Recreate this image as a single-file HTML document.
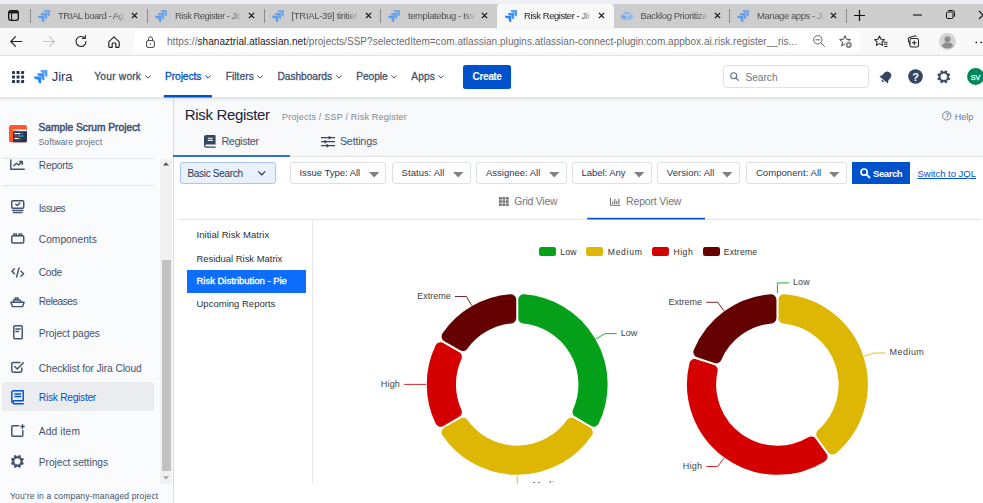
<!DOCTYPE html>
<html lang="en">
<head>
<meta charset="utf-8">
<title>Risk Register - Jira</title>
<style>
*{box-sizing:border-box;margin:0;padding:0}
html,body{width:983px;height:503px;overflow:hidden;background:#fff}
body{font-family:"Liberation Sans",Arial,sans-serif;color:#172b4d;position:relative;font-size:10px}
.a{position:absolute}
.t{position:absolute;white-space:nowrap;line-height:1}
svg{position:absolute;overflow:visible}
.sep{position:absolute;top:9px;width:1px;height:14px;background:#8a8a8a}
.fb{position:absolute;top:162px;height:22px;background:#fff;border:1px solid #dcdfe4;border-radius:3px}
</style>
</head>
<body>
<!-- ===== BROWSER CHROME ===== -->
<div class="a" style="left:0;top:0;width:983px;height:4px;background:#eff0f6"></div>
<div class="a" style="left:0;top:4px;width:983px;height:24px;background:#cdcdcd"></div>
<div class="a" style="left:497px;top:4px;width:117px;height:24px;background:#f8f8f9;border-radius:3.500px 3.500px 0 0"></div>
<div class="a" style="left:0;top:28px;width:983px;height:28px;background:#f8f8f9;border-bottom:1px solid #e1e1e1"></div>
<div class="a" style="left:134px;top:31px;width:726px;height:21px;background:#fff;border-radius:4px"></div>
<svg width="0" height="0"><defs>
<symbol id="jira" viewBox="0 0 24 24"><path d="M11.571 11.513H0a5.218 5.218 0 0 0 5.232 5.215h2.13v2.057A5.215 5.215 0 0 0 12.575 24V12.518a1.005 1.005 0 0 0-1.005-1.005z"/><path d="M17.294 5.757H5.736a5.215 5.215 0 0 0 5.215 5.214h2.129v2.058a5.218 5.218 0 0 0 5.215 5.214V6.758a1.001 1.001 0 0 0-1.001-1.001z" opacity=".9"/><path d="M23.013 0H11.455a5.215 5.215 0 0 0 5.215 5.215h2.129v2.057A5.215 5.215 0 0 0 24 12.483V1.005A1.001 1.001 0 0 0 23.013 0Z" opacity=".78"/></symbol>
<symbol id="xx" viewBox="0 0 8 8"><path d="M1 1L7 7M7 1L1 7" stroke="#111" stroke-width="1.400" fill="none"/></symbol>
</defs></svg>
<svg style="left:8px;top:10px" width="11" height="11" viewBox="0 0 11 11"><rect x=".7" y=".7" width="9.600" height="9.600" rx="2" fill="none" stroke="#111" stroke-width="1.300"/><path d="M1 2.300h9" stroke="#111" stroke-width="2.200"/><path d="M3.600 3v7" stroke="#111" stroke-width="1"/></svg>
<div class="sep" style="left:30px"></div>
<svg style="left:38px;top:10px" width="12" height="12"><use href="#jira" fill="#5c9df0"/></svg>
<div class="t" style="left:58.00px;top:11.00px;font-size:9.5px;color:#4f4f4f;letter-spacing:-0.472px;-webkit-mask-image:linear-gradient(90deg,#000 86%,rgba(0,0,0,.2) 100%);mask-image:linear-gradient(90deg,#000 86%,rgba(0,0,0,.2) 100%);padding-bottom:3px;">TRIAL board - Ag</div>
<svg style="left:131px;top:12.200px" width="7" height="7"><use href="#xx"/></svg>
<div class="sep" style="left:147px"></div>
<svg style="left:155px;top:10px" width="12" height="12"><use href="#jira" fill="#5c9df0"/></svg>
<div class="t" style="left:175.00px;top:11.00px;font-size:9.5px;color:#4f4f4f;letter-spacing:-0.524px;-webkit-mask-image:linear-gradient(90deg,#000 86%,rgba(0,0,0,.2) 100%);mask-image:linear-gradient(90deg,#000 86%,rgba(0,0,0,.2) 100%);padding-bottom:3px;">Risk Register - Jir</div>
<svg style="left:248px;top:12.200px" width="7" height="7"><use href="#xx"/></svg>
<div class="sep" style="left:264px"></div>
<svg style="left:272px;top:10px" width="12" height="12"><use href="#jira" fill="#5c9df0"/></svg>
<div class="t" style="left:291.50px;top:11.00px;font-size:9.5px;color:#4f4f4f;letter-spacing:-0.304px;-webkit-mask-image:linear-gradient(90deg,#000 86%,rgba(0,0,0,.2) 100%);mask-image:linear-gradient(90deg,#000 86%,rgba(0,0,0,.2) 100%);padding-bottom:3px;">[TRIAL-39] tiritiet</div>
<svg style="left:365px;top:12.200px" width="7" height="7"><use href="#xx"/></svg>
<div class="sep" style="left:380px"></div>
<svg style="left:388px;top:10px" width="12" height="12"><use href="#jira" fill="#5c9df0"/></svg>
<div class="t" style="left:408.00px;top:11.00px;font-size:9.5px;color:#4f4f4f;letter-spacing:-0.404px;-webkit-mask-image:linear-gradient(90deg,#000 86%,rgba(0,0,0,.2) 100%);mask-image:linear-gradient(90deg,#000 86%,rgba(0,0,0,.2) 100%);padding-bottom:3px;">templatebug - Iss</div>
<svg style="left:481px;top:12.200px" width="7" height="7"><use href="#xx"/></svg>
<svg style="left:505px;top:10px" width="12" height="12"><use href="#jira" fill="#2684ff"/></svg>
<div class="t" style="left:524.00px;top:11.00px;font-size:9.5px;color:#1b1b1b;letter-spacing:-0.471px;-webkit-mask-image:linear-gradient(90deg,#000 86%,rgba(0,0,0,.2) 100%);mask-image:linear-gradient(90deg,#000 86%,rgba(0,0,0,.2) 100%);padding-bottom:3px;">Risk Register - Jir</div>
<svg style="left:598px;top:12.200px" width="7" height="7"><use href="#xx"/></svg>
<svg style="left:621px;top:11px" width="12" height="10" viewBox="0 0 12 10"><path d="M6 0L12 2 6 4 0 2z" fill="#a4c5f6"/><path d="M3 1.600L6 2.600 9 1.600" fill="none" stroke="#6fa3ec" stroke-width=".7"/><path d="M.3 3.300l5.200 1.800v4.200l-5.200-1.800z" fill="#78aaf0"/><path d="M11.700 3.300l-5.200 1.800v4.200l5.200-1.800z" fill="#8cb7f3"/></svg>
<div class="t" style="left:640.50px;top:11.00px;font-size:9.5px;color:#4f4f4f;letter-spacing:-0.383px;-webkit-mask-image:linear-gradient(90deg,#000 86%,rgba(0,0,0,.2) 100%);mask-image:linear-gradient(90deg,#000 86%,rgba(0,0,0,.2) 100%);padding-bottom:3px;">Backlog Prioritiza</div>
<svg style="left:714px;top:12.200px" width="7" height="7"><use href="#xx"/></svg>
<div class="sep" style="left:729px"></div>
<svg style="left:737px;top:10px" width="12" height="12"><use href="#jira" fill="#5c9df0"/></svg>
<div class="t" style="left:757.00px;top:11.00px;font-size:9.5px;color:#4f4f4f;letter-spacing:-0.430px;-webkit-mask-image:linear-gradient(90deg,#000 86%,rgba(0,0,0,.2) 100%);mask-image:linear-gradient(90deg,#000 86%,rgba(0,0,0,.2) 100%);padding-bottom:3px;">Manage apps - Ji</div>
<svg style="left:830px;top:12.200px" width="7" height="7"><use href="#xx"/></svg>
<div class="sep" style="left:846px"></div>
<svg style="left:854px;top:10px" width="11" height="11" viewBox="0 0 11 11"><path d="M5.500 0v11M0 5.500h11" stroke="#111" stroke-width="1.200"/></svg>
<svg style="left:913px;top:14px" width="9" height="2" viewBox="0 0 9 2"><path d="M0 1h9" stroke="#111" stroke-width="1.100"/></svg>
<svg style="left:946px;top:10px" width="9" height="9" viewBox="0 0 9 9"><rect x=".5" y="2" width="6.500" height="6.500" rx="1.300" fill="none" stroke="#111"/><path d="M2.300 .5h4.200a2 2 0 0 1 2 2v4.200" fill="none" stroke="#111"/></svg>
<svg style="left:979px;top:11px" width="8" height="8" viewBox="0 0 8 8"><path d="M0 0l8 8M8 0l-8 8" stroke="#111" stroke-width="1.100"/></svg>
<svg style="left:10px;top:36px" width="12" height="11" viewBox="0 0 12 11"><path d="M11.700 5.500H1M5.500 .7L.8 5.500l4.700 4.800" fill="none" stroke="#222" stroke-width="1.150" stroke-linecap="round" stroke-linejoin="round"/></svg>
<svg style="left:42.500px;top:36px" width="12" height="11" viewBox="0 0 12 11"><path d="M.3 5.500H11M6.500 .7l4.700 4.800-4.700 4.800" fill="none" stroke="#c6c6c6" stroke-width="1.150" stroke-linecap="round" stroke-linejoin="round"/></svg>
<svg style="left:75px;top:35px" width="12" height="13" viewBox="0 0 12 13"><path d="M11 6.500a5 5 0 1 1-1.600-3.700" fill="none" stroke="#222" stroke-width="1.150" stroke-linecap="round"/><path d="M10.300 .5v3h-3" fill="none" stroke="#222" stroke-width="1.150" stroke-linecap="round" stroke-linejoin="round"/></svg>
<svg style="left:107.500px;top:35.500px" width="12" height="12" viewBox="0 0 12 12"><path d="M.8 5.800L6 .9l5.200 4.900V10.500a.8.800 0 0 1-.8.800H7.800V7.600a.6.600 0 0 0-.6-.6H4.800a.6.600 0 0 0-.6.600v3.700H1.600a.8.800 0 0 1-.8-.8z" fill="none" stroke="#222" stroke-width="1.150" stroke-linejoin="round"/></svg>
<svg style="left:146px;top:35.500px" width="9" height="12" viewBox="0 0 9 12"><rect x=".6" y="4.600" width="7.800" height="6.800" rx="1.300" fill="none" stroke="#444" stroke-width="1"/><path d="M2.500 4.600V2.800a2 2 0 0 1 4 0v1.800" fill="none" stroke="#444" stroke-width="1"/><circle cx="4.500" cy="8" r=".8" fill="#444"/></svg>
<div class="t" style="left:167.00px;top:37.00px;font-size:10px;color:#6b6b6b;letter-spacing:0.061px;">https://</div>
<div class="t" style="left:197.50px;top:37.00px;font-size:10px;color:#1a1a1a;letter-spacing:0.048px;">shanaztrial.atlassian.net</div>
<div class="t" style="left:306.00px;top:37.00px;font-size:10px;color:#6b6b6b;letter-spacing:0.035px;">/projects/SSP?selectedItem=com.atlassian.plugins.atlassian-connect-plugin:com.appbox.ai.risk.register__ris...</div>
<svg style="left:813px;top:35px" width="12" height="12" viewBox="0 0 12 12"><circle cx="4.800" cy="4.800" r="4.200" fill="none" stroke="#666" stroke-width="1"/><path d="M7.900 7.900l3.600 3.600M2.800 4.800h4" stroke="#666" stroke-width="1" stroke-linecap="round"/></svg>
<svg style="left:839px;top:34.500px" width="13" height="13" viewBox="0 0 13 13"><path d="M6.00 0.70L7.53 4.20L11.33 4.57L8.47 7.10L9.29 10.83L6.00 8.90L2.71 10.83L3.53 7.10L0.67 4.57L4.47 4.20z" fill="none" stroke="#444" stroke-width="1" stroke-linejoin="round"/><circle cx="9.800" cy="10" r="3.700" fill="#fff"/><circle cx="9.800" cy="10" r="2.900" fill="#777"/><path d="M9.800 8.400v3.200M8.200 10h3.200" stroke="#fff" stroke-width=".9"/></svg>
<svg style="left:874px;top:34.500px" width="14" height="13" viewBox="0 0 14 13"><path d="M5.500 1l1.500 3.200 3.400.4-2.500 2.300.7 3.500-3.100-1.800-3.100 1.800.7-3.500L.6 4.600 4 4.200z" fill="none" stroke="#222" stroke-width="1.050" stroke-linejoin="round"/><path d="M9.500 7.200h4M10 9.300h3.500M10.300 11.400h3.200" stroke="#222" stroke-width="1.050"/></svg>
<svg style="left:906px;top:34.500px" width="14" height="13" viewBox="0 0 14 13"><rect x="4" y="3.500" width="8.500" height="8.500" rx="1.800" fill="none" stroke="#222" stroke-width="1.050"/><path d="M3.800 9.700l-1.600-5a1.800 1.800 0 0 1 1.100-2.200l5-1.600a1.800 1.800 0 0 1 2 .8" fill="none" stroke="#222" stroke-width="1.050"/><path d="M8.250 5.500v4.500M6 7.750h4.500" stroke="#222" stroke-width="1.050"/></svg>
<svg style="left:938.500px;top:33px" width="17" height="17" viewBox="0 0 17 17"><circle cx="8.500" cy="8.500" r="8.500" fill="#d4d4d4"/><circle cx="8.500" cy="6.200" r="3" fill="#8e8e8e"/><path d="M3 13.200c.6-3 2.600-3.600 5.500-3.600s4.900.6 5.500 3.600a8 8 0 0 1-11 0z" fill="#8e8e8e"/></svg>
<svg style="left:975px;top:41px" width="12" height="3" viewBox="0 0 12 3"><circle cx="1.300" cy="1.300" r=".9" fill="#222"/><circle cx="6.100" cy="1.300" r=".9" fill="#222"/><circle cx="10.900" cy="1.300" r=".9" fill="#222"/></svg>
<!-- ===== JIRA TOP NAV ===== -->
<div class="a" style="left:0;top:56px;width:983px;height:41.300px;background:#fff"></div>
<svg style="left:12px;top:71px" width="12.100" height="12.100" viewBox="0 0 12.100 12.100" fill="#253858"><rect x="0.00" y="0.00" width="3" height="3" rx=".5"/><rect x="4.55" y="0.00" width="3" height="3" rx=".5"/><rect x="9.10" y="0.00" width="3" height="3" rx=".5"/><rect x="0.00" y="4.55" width="3" height="3" rx=".5"/><rect x="4.55" y="4.55" width="3" height="3" rx=".5"/><rect x="9.10" y="4.55" width="3" height="3" rx=".5"/><rect x="0.00" y="9.10" width="3" height="3" rx=".5"/><rect x="4.55" y="9.10" width="3" height="3" rx=".5"/><rect x="9.10" y="9.10" width="3" height="3" rx=".5"/></svg>
<svg style="left:34px;top:69.800px" width="13.600" height="13.600"><use href="#jira" fill="#2684ff"/></svg>
<div class="t" style="left:51.80px;top:70.00px;font-size:13px;color:#253858;letter-spacing:-0.063px;">Jira</div>
<div class="t" style="left:94.30px;top:72.00px;font-size:10.2px;color:#42526e;letter-spacing:0.218px;-webkit-text-stroke:.3px #42526e;">Your work</div>
<svg style="left:144.7px;top:74.8px" width="6" height="4" viewBox="0 0 6 4"><path d="M.6 .7L3 3.100 5.400 .7" fill="none" stroke="#42526e" stroke-width="1" stroke-linecap="round" stroke-linejoin="round"/></svg>
<div class="t" style="left:165.00px;top:72.00px;font-size:10.2px;color:#0052cc;letter-spacing:-0.064px;-webkit-text-stroke:.3px #0052cc;">Projects</div>
<svg style="left:205px;top:74.8px" width="6" height="4" viewBox="0 0 6 4"><path d="M.6 .7L3 3.100 5.400 .7" fill="none" stroke="#0052cc" stroke-width="1" stroke-linecap="round" stroke-linejoin="round"/></svg>
<div class="t" style="left:225.70px;top:72.00px;font-size:10.2px;color:#42526e;letter-spacing:0.052px;-webkit-text-stroke:.3px #42526e;">Filters</div>
<svg style="left:257px;top:74.8px" width="6" height="4" viewBox="0 0 6 4"><path d="M.6 .7L3 3.100 5.400 .7" fill="none" stroke="#42526e" stroke-width="1" stroke-linecap="round" stroke-linejoin="round"/></svg>
<div class="t" style="left:277.50px;top:72.00px;font-size:10.2px;color:#42526e;letter-spacing:-0.044px;-webkit-text-stroke:.3px #42526e;">Dashboards</div>
<svg style="left:335.5px;top:74.8px" width="6" height="4" viewBox="0 0 6 4"><path d="M.6 .7L3 3.100 5.400 .7" fill="none" stroke="#42526e" stroke-width="1" stroke-linecap="round" stroke-linejoin="round"/></svg>
<div class="t" style="left:356.30px;top:72.00px;font-size:10.2px;color:#42526e;letter-spacing:-0.089px;-webkit-text-stroke:.3px #42526e;">People</div>
<svg style="left:390.7px;top:74.8px" width="6" height="4" viewBox="0 0 6 4"><path d="M.6 .7L3 3.100 5.400 .7" fill="none" stroke="#42526e" stroke-width="1" stroke-linecap="round" stroke-linejoin="round"/></svg>
<div class="t" style="left:411.30px;top:72.00px;font-size:10.2px;color:#42526e;letter-spacing:0.116px;-webkit-text-stroke:.3px #42526e;">Apps</div>
<svg style="left:438.2px;top:74.8px" width="6" height="4" viewBox="0 0 6 4"><path d="M.6 .7L3 3.100 5.400 .7" fill="none" stroke="#42526e" stroke-width="1" stroke-linecap="round" stroke-linejoin="round"/></svg>
<svg style="left:163px;top:94px" width="50" height="4" viewBox="0 0 50 4"><path d="M.7 3.500V1.700a.8.800 0 0 1 .8-.8H48.200a.8.800 0 0 1 .8.800V3.500z" fill="#0052cc"/></svg>
<div class="a" style="left:463px;top:65px;width:48px;height:23.500px;background:#0052cc;border-radius:2.500px"></div>
<div class="t" style="left:472.50px;top:72.00px;font-size:10.2px;color:#fff;font-weight:700;letter-spacing:-0.453px;">Create</div>
<div class="a" style="left:722.500px;top:65.300px;width:146px;height:22.400px;background:#fff;border:1.500px solid #dfe1e6;border-radius:4px"></div>
<svg style="left:730px;top:72px" width="9" height="9" viewBox="0 0 9 9"><circle cx="3.700" cy="3.700" r="3" fill="none" stroke="#5e6c84" stroke-width="1.100"/><path d="M6 6l2.400 2.400" stroke="#5e6c84" stroke-width="1.100" stroke-linecap="round"/></svg>
<div class="t" style="left:745.50px;top:73.00px;font-size:10.2px;color:#6b778c;letter-spacing:-0.047px;">Search</div>
<svg style="left:879px;top:70px" width="14" height="14" viewBox="0 0 14 14"><g transform="rotate(40 7 7)" fill="#344563"><path d="M7 1.200a4 4 0 0 1 4 4v2.900l1.300 1.900a.5.500 0 0 1-.4.800H2.100a.5.500 0 0 1-.4-.8L3 8.100V5.200a4 4 0 0 1 4-4z"/><path d="M5.500 11.600h3a1.500 1.500 0 0 1-3 0z"/></g></svg>
<svg style="left:907.500px;top:69px" width="15" height="15" viewBox="0 0 15 15"><circle cx="7.500" cy="7.500" r="7.300" fill="#344563"/></svg>
<div class="t" style="left:912.20px;top:72.00px;font-size:11px;color:#fff;font-weight:700;">?</div>
<svg style="left:937.300px;top:69.700px" width="13.600" height="13.600" viewBox="0 0 15 15"><path fill="#344563" fill-rule="evenodd" stroke="#344563" stroke-width=".5" stroke-linejoin="round" d="M12.95 8.23L14.33 9.43L13.69 10.97L11.87 10.84L10.84 11.87L10.97 13.69L9.43 14.33L8.23 12.95L6.77 12.95L5.57 14.33L4.03 13.69L4.16 11.87L3.13 10.84L1.31 10.97L0.67 9.43L2.05 8.23L2.05 6.77L0.67 5.57L1.31 4.03L3.13 4.16L4.16 3.13L4.03 1.31L5.57 0.67L6.77 2.05L8.23 2.05L9.43 0.67L10.97 1.31L10.84 3.13L11.87 4.16L13.69 4.03L14.33 5.57L12.95 6.77zM11.40 7.50A3.9 3.9 0 1 0 3.60 7.50A3.9 3.9 0 1 0 11.40 7.50z"/></svg>
<svg style="left:966.500px;top:68px" width="17" height="17" viewBox="0 0 17 17"><circle cx="8.600" cy="8.600" r="8.500" fill="#00875a"/></svg>
<div class="t" style="left:970.80px;top:74.00px;font-size:7.2px;color:#fff;letter-spacing:-0.097px;-webkit-text-stroke:.25px #fff;">SV</div>
<!-- ===== SIDEBAR ===== -->
<div class="a" style="left:0;top:98px;width:173.500px;height:405px;background:#fafbfc;border-right:1px solid #d8dbe0"></div>
<svg style="left:9.200px;top:124.500px" width="18" height="17.600" viewBox="0 0 18 17.600"><defs><clipPath id="pav"><rect width="18" height="17.600" rx="2.200"/></clipPath></defs><g clip-path="url(#pav)"><rect width="18" height="17.600" fill="#ff5630"/><rect x="4" y="4.300" width="14" height="13.300" fill="#253858"/><rect x="4" y="4.300" width="14" height="1.900" fill="#ebecf0"/><rect x="5" y="4.800" width="1" height=".9" fill="#ffab00"/><rect x="6.300" y="4.800" width="1" height=".9" fill="#36b37e"/><rect x="7.600" y="4.800" width="1" height=".9" fill="#4c9aff"/><rect x="5.400" y="8" width="5.800" height="1.200" fill="#f4f5f7"/><rect x="11.600" y="8" width="2" height="1.200" fill="#2684ff"/><rect x="5.400" y="10.200" width="2.600" height="1.600" fill="#de350b"/><rect x="8.800" y="10.200" width="5.800" height="1.600" fill="#00a3bf"/><rect x="5.400" y="12.900" width="4.400" height="1.200" fill="#f4f5f7"/><rect x="10.500" y="12.700" width="1.500" height="1.500" rx=".75" fill="#ff5630"/></g></svg>
<div class="t" style="left:38.50px;top:123.00px;font-size:10.2px;color:#42526e;letter-spacing:0.013px;-webkit-text-stroke:.5px #42526e;">Sample Scrum Project</div>
<div class="t" style="left:38.50px;top:138.00px;font-size:8.6px;color:#5e6c84;letter-spacing:0.099px;">Software project</div>
<div class="a" style="left:2px;top:158px;width:152px;height:1px;background:#e4e6ea"></div>
<div class="a" style="left:2px;top:185px;width:152px;height:1px;background:#e4e6ea"></div>
<div class="a" style="left:160.300px;top:158.500px;width:12px;height:325px;background:#f1f1f1"></div>
<div class="a" style="left:161.500px;top:260px;width:9.500px;height:211px;background:#c1c1c1"></div>
<svg style="left:163.400px;top:162.200px" width="6" height="4" viewBox="0 0 6 4"><path d="M0 3.500L3 .3 6 3.500z" fill="#505050"/></svg>
<svg style="left:163.400px;top:475.500px" width="6" height="4" viewBox="0 0 6 4"><path d="M0 .3L3 3.500 6 .3z" fill="#a3a3a3"/></svg>
<div class="a" style="left:2px;top:382.200px;width:151.500px;height:29px;background:#ebecf0;border-radius:2px"></div>
<div class="t" style="left:38.80px;top:161.00px;font-size:10.2px;color:#42526e;letter-spacing:-0.210px;">Reports</div>
<div class="t" style="left:38.80px;top:204.00px;font-size:10.2px;color:#42526e;letter-spacing:-0.509px;">Issues</div>
<div class="t" style="left:38.80px;top:235.00px;font-size:10.2px;color:#42526e;letter-spacing:0.023px;">Components</div>
<div class="t" style="left:38.80px;top:268.00px;font-size:10.2px;color:#42526e;letter-spacing:-0.290px;">Code</div>
<div class="t" style="left:38.80px;top:297.00px;font-size:10.2px;color:#42526e;letter-spacing:-0.536px;">Releases</div>
<div class="t" style="left:38.80px;top:329.00px;font-size:10.2px;color:#42526e;letter-spacing:-0.100px;">Project pages</div>
<div class="t" style="left:38.80px;top:364.00px;font-size:10.2px;color:#42526e;letter-spacing:-0.081px;">Checklist for Jira Cloud</div>
<div class="t" style="left:38.80px;top:393.00px;font-size:10.2px;color:#0052cc;letter-spacing:-0.260px;">Risk Register</div>
<div class="t" style="left:38.80px;top:427.00px;font-size:10.2px;color:#42526e;letter-spacing:0.125px;">Add item</div>
<div class="t" style="left:38.80px;top:458.00px;font-size:10.2px;color:#42526e;letter-spacing:-0.029px;">Project settings</div>
<div class="t" style="left:10.00px;top:492.00px;font-size:8.5px;color:#42526e;letter-spacing:0.166px;">You&#x27;re in a company-managed project</div>
<svg style="left:10.300px;top:159.500px" width="15" height="10" viewBox="0 0 15 10"><path d="M.8 0V9.200H14.200" fill="none" stroke="#42526e" stroke-width="1.450" stroke-linecap="round" stroke-linejoin="round"/><path d="M3.800 5.800L6.500 3.200 8.500 5 12 1.800M9.500 1.500H12.300V4.300" fill="none" stroke="#42526e" stroke-width="1.450" stroke-linecap="round" stroke-linejoin="round"/></svg>
<svg style="left:10.900px;top:200.300px" width="13.500" height="13.500" viewBox="0 0 13.500 13.500"><rect x=".75" y=".75" width="12" height="7.500" rx="1.200" fill="none" stroke="#42526e" stroke-width="1.450" stroke-linecap="round" stroke-linejoin="round"/><path d="M4.800 4.200L6.200 5.600 8.800 3" fill="none" stroke="#42526e" stroke-width="1.450" stroke-linecap="round" stroke-linejoin="round" stroke-width="1.200"/><path d="M1.500 10.400H12M2.500 12.600H11" fill="none" stroke="#42526e" stroke-width="1.450" stroke-linecap="round" stroke-linejoin="round"/></svg>
<svg style="left:10.900px;top:233px" width="13.500" height="10.800" viewBox="0 0 13.500 10.800"><rect x=".75" y="2.800" width="12" height="7.200" rx="1.200" fill="none" stroke="#42526e" stroke-width="1.450" stroke-linecap="round" stroke-linejoin="round"/><path d="M2.800 2.800V.9H5.400V2.800M8.100 2.800V.9H10.700V2.800" fill="none" stroke="#42526e" stroke-width="1.450" stroke-linecap="round" stroke-linejoin="round"/></svg>
<svg style="left:11px;top:267px" width="13.500" height="11" viewBox="0 0 13.500 11"><path d="M3.500 1.800L.9 4.300 3.500 6.800M10 4.200L12.600 6.700 10 9.200M8 .9L5.500 10.100" fill="none" stroke="#42526e" stroke-width="1.450" stroke-linecap="round" stroke-linejoin="round"/></svg>
<svg style="left:10.300px;top:296.500px" width="15" height="10.500" viewBox="0 0 15 10.500"><path d="M.9 5.300H14.100L12.600 9.600H2.400z" fill="none" stroke="#42526e" stroke-width="1.450" stroke-linecap="round" stroke-linejoin="round"/><path d="M3.500 5.300V2.900H9.800L11.300 5.300M5.300 2.900V.9H8V2.900" fill="none" stroke="#42526e" stroke-width="1.450" stroke-linecap="round" stroke-linejoin="round"/></svg>
<svg style="left:13px;top:324.500px" width="10" height="14.500" viewBox="0 0 10 14.500"><rect x=".75" y=".75" width="8.500" height="13" rx="1.200" fill="none" stroke="#42526e" stroke-width="1.450" stroke-linecap="round" stroke-linejoin="round"/><path d="M2.800 4H7.200M2.800 6.500H5.500" fill="none" stroke="#42526e" stroke-width="1.450" stroke-linecap="round" stroke-linejoin="round" stroke-width="1.300"/></svg>
<svg style="left:11px;top:361.300px" width="14" height="12" viewBox="0 0 14 12"><path d="M10.800 7V9.800A1.400 1.400 0 0 1 9.400 11.200H2.200A1.400 1.400 0 0 1 .8 9.800V2.800A1.400 1.400 0 0 1 2.200 1.400H9" fill="none" stroke="#42526e" stroke-width="1.450" stroke-linecap="round" stroke-linejoin="round"/><path d="M3.800 5.600L6.200 8 12.400 1.800" fill="none" stroke="#42526e" stroke-width="1.450" stroke-linecap="round" stroke-linejoin="round" stroke-width="2.300"/></svg>
<svg style="left:11.300px;top:389.700px" width="13" height="14.500" viewBox="0 0 13 14.500"><path d="M12.200 10.800H2.600A1.800 1.800 0 0 0 2.600 13.700H12.200M.8 12V2.600A1.800 1.800 0 0 1 2.600 .8H12.200V10.800" fill="none" stroke="#0052cc" stroke-width="1.450" stroke-linecap="round" stroke-linejoin="round"/><path d="M4 4H9.500M4 6.500H9.500" fill="none" stroke="#0052cc" stroke-width="1.450" stroke-linecap="round" stroke-linejoin="round" stroke-width="1.300"/></svg>
<svg style="left:11px;top:424px" width="14" height="13" viewBox="0 0 14 13"><path d="M7.500 1.800H1.800A1 1 0 0 0 .8 2.800V11.200A1 1 0 0 0 1.800 12.200H10.800A1 1 0 0 0 11.800 11.200V6.500" fill="none" stroke="#42526e" stroke-width="1.450" stroke-linecap="round" stroke-linejoin="round"/><path d="M11.500 .8V4.200M9.800 2.500H13.200" fill="none" stroke="#42526e" stroke-width="1.450" stroke-linecap="round" stroke-linejoin="round" stroke-width="1.300"/></svg>
<svg style="left:11px;top:455.300px" width="12.800" height="12.800" viewBox="0 0 13.800 13.800"><path fill="#3b4b68" fill-rule="evenodd" stroke="#3b4b68" stroke-width=".6" stroke-linejoin="round" d="M12.29 7.97L13.56 8.72L12.89 10.32L11.47 9.96L9.96 11.47L10.32 12.89L8.72 13.56L7.97 12.29L5.83 12.29L5.08 13.56L3.48 12.89L3.84 11.47L2.33 9.96L0.91 10.32L0.24 8.72L1.51 7.97L1.51 5.83L0.24 5.08L0.91 3.48L2.33 3.84L3.84 2.33L3.48 0.91L5.08 0.24L5.83 1.51L7.97 1.51L8.72 0.24L10.32 0.91L9.96 2.33L11.47 3.84L12.89 3.48L13.56 5.08L12.29 5.83zM10.60 6.90A3.7 3.7 0 1 0 3.20 6.90A3.7 3.7 0 1 0 10.60 6.90z"/></svg>
<!-- ===== MAIN HEADER ===== -->
<div class="a" style="left:174px;top:98px;width:809px;height:58px;background:#f8f9fb"></div>
<div class="a" style="left:174px;top:155.500px;width:809px;height:1px;background:#dcdfe4"></div>
<svg style="left:173px;top:154px" width="118" height="4" viewBox="0 0 118 4"><rect x="0" y="1.200" width="117" height="1.600" fill="#0052cc"/></svg>
<div class="t" style="left:184.75px;top:107.00px;font-size:15px;color:#1b2436;letter-spacing:-0.326px;">Risk Register</div>
<div class="t" style="left:282.00px;top:113.00px;font-size:9px;color:#7d8696;letter-spacing:0.204px;">Projects / SSP / Risk Register</div>
<svg style="left:942.300px;top:111px" width="9.600" height="9.600" viewBox="0 0 9.600 9.600"><circle cx="4.800" cy="4.800" r="4.200" fill="none" stroke="#6b778c" stroke-width=".9"/></svg>
<div class="t" style="left:945.30px;top:113.00px;font-size:6.5px;color:#6b778c;font-weight:700;">?</div>
<div class="t" style="left:954.80px;top:113.00px;font-size:9px;color:#6b778c;letter-spacing:0.021px;">Help</div>
<svg style="left:204.200px;top:135.200px" width="11.600" height="12.800" viewBox="0 0 11.600 12.800"><path d="M2.200 0H10.400A1.200 1.200 0 0 1 11.600 1.200V9.600H2.300A1 1 0 0 0 2.300 11.600H11.600V12.800H2.200A2.200 2.200 0 0 1 0 10.600V2.200A2.200 2.200 0 0 1 2.200 0z" fill="#344563"/><path d="M3.800 3.200H8.800M3.800 5.400H8.800" stroke="#f8f9fb" stroke-width="1.100"/></svg>
<div class="t" style="left:221.40px;top:136.00px;font-size:10.8px;color:#42526e;letter-spacing:-0.365px;">Register</div>
<svg style="left:321px;top:136.200px" width="14" height="11.400" viewBox="0 0 14 11.400"><path d="M0 1.700H14M0 5.700H14M0 9.700H14" stroke="#344563" stroke-width="1.350"/><path d="M8.500 .2V3.200M4.300 4.200V7.200M6.300 8.200V11.200" stroke="#344563" stroke-width="1.800"/></svg>
<div class="t" style="left:339.90px;top:136.00px;font-size:10.8px;color:#42526e;letter-spacing:-0.227px;">Settings</div>
<!-- ===== FILTER BAR ===== -->
<div class="a" style="left:180.100px;top:162.100px;width:95.700px;height:21.700px;background:#e9f1fd;border:1px solid #a9c6f2;border-radius:3px"></div>
<div class="t" style="left:187.50px;top:169.00px;font-size:10px;color:#253858;letter-spacing:-0.310px;">Basic Search</div>
<svg style="left:258px;top:171px" width="7.500" height="5" viewBox="0 0 7.500 5"><path d="M.6 .7L3.750 4 6.900 .7" fill="none" stroke="#253858" stroke-width="1.100" stroke-linecap="round" stroke-linejoin="round"/></svg>
<div class="fb" style="left:289.8px;width:96.7px"></div>
<div class="t" style="left:299.40px;top:168.00px;font-size:9.5px;color:#253858;letter-spacing:-0.020px;">Issue Type: All</div>
<svg style="left:368.6px;top:172px" width="10.400" height="5.500" viewBox="0 0 10.400 5.500"><path d="M0 0H10.400L5.200 5.500z" fill="#808080"/></svg>
<div class="fb" style="left:392.2px;width:78.9px"></div>
<div class="t" style="left:401.60px;top:168.00px;font-size:9.5px;color:#253858;letter-spacing:0.050px;">Status: All</div>
<svg style="left:453.3px;top:172px" width="10.400" height="5.500" viewBox="0 0 10.400 5.500"><path d="M0 0H10.400L5.200 5.500z" fill="#808080"/></svg>
<div class="fb" style="left:476.2px;width:90.4px"></div>
<div class="t" style="left:486.00px;top:168.00px;font-size:9.5px;color:#253858;letter-spacing:-0.008px;">Assignee: All</div>
<svg style="left:549.2px;top:172px" width="10.400" height="5.500" viewBox="0 0 10.400 5.500"><path d="M0 0H10.400L5.200 5.500z" fill="#808080"/></svg>
<div class="fb" style="left:572.4px;width:79.7px"></div>
<div class="t" style="left:581.60px;top:168.00px;font-size:9.5px;color:#253858;letter-spacing:-0.058px;">Label: Any</div>
<svg style="left:634.3px;top:172px" width="10.400" height="5.500" viewBox="0 0 10.400 5.500"><path d="M0 0H10.400L5.200 5.500z" fill="#808080"/></svg>
<div class="fb" style="left:657.4px;width:83.0px"></div>
<div class="t" style="left:666.80px;top:168.00px;font-size:9.5px;color:#253858;letter-spacing:0.050px;">Version: All</div>
<svg style="left:722.3px;top:172px" width="10.400" height="5.500" viewBox="0 0 10.400 5.500"><path d="M0 0H10.400L5.200 5.500z" fill="#808080"/></svg>
<div class="fb" style="left:746.3px;width:101.2px"></div>
<div class="t" style="left:755.90px;top:168.00px;font-size:9.5px;color:#253858;letter-spacing:0.069px;">Component: All</div>
<svg style="left:829.2px;top:172px" width="10.400" height="5.500" viewBox="0 0 10.400 5.500"><path d="M0 0H10.400L5.200 5.500z" fill="#808080"/></svg>
<div class="a" style="left:852px;top:162.100px;width:57.800px;height:21.900px;background:#0052cc"></div>
<svg style="left:860.200px;top:168px" width="10.400" height="10.400" viewBox="0 0 10.400 10.400"><circle cx="4.100" cy="4.100" r="3.100" fill="none" stroke="#fff" stroke-width="1.700"/><path d="M6.400 6.400L9.500 9.500" stroke="#fff" stroke-width="1.900" stroke-linecap="round"/></svg>
<div class="t" style="left:873.00px;top:169.00px;font-size:9.5px;color:#fff;font-weight:700;letter-spacing:-0.415px;">Search</div>
<div class="t" style="left:917.50px;top:169.00px;font-size:9.5px;color:#0052cc;letter-spacing:-0.008px;text-decoration:underline;text-underline-offset:1px;">Switch to JQL</div>
<!-- ===== VIEW TABS ===== -->
<svg style="left:499px;top:197px" width="9.700" height="9" viewBox="0 0 9.700 9" fill="#757575"><rect x="0.00" y="0.00" width="2.800" height="2.600"/><rect x="3.45" y="0.00" width="2.800" height="2.600"/><rect x="6.90" y="0.00" width="2.800" height="2.600"/><rect x="0.00" y="3.20" width="2.800" height="2.600"/><rect x="3.45" y="3.20" width="2.800" height="2.600"/><rect x="6.90" y="3.20" width="2.800" height="2.600"/><rect x="0.00" y="6.40" width="2.800" height="2.600"/><rect x="3.45" y="6.40" width="2.800" height="2.600"/><rect x="6.90" y="6.40" width="2.800" height="2.600"/></svg>
<div class="t" style="left:514.30px;top:196.00px;font-size:10.5px;color:#757575;letter-spacing:-0.259px;">Grid View</div>
<svg style="left:610.400px;top:197.700px" width="10.600" height="7.800" viewBox="0 0 10.600 7.800"><path d="M.5 0V7.300H10.600" fill="none" stroke="#6e6e6e" stroke-width="1"/><path d="M2.800 6V3.500M4.800 6V1M6.800 6V2.800M8.800 6V.8" stroke="#6e6e6e" stroke-width="1.100"/></svg>
<div class="t" style="left:626.10px;top:196.00px;font-size:10.5px;color:#757575;letter-spacing:-0.165px;">Report View</div>
<div class="a" style="left:180px;top:218.600px;width:801px;height:1px;background:#e4e4e4"></div>
<svg style="left:587px;top:217px" width="119" height="4" viewBox="0 0 119 4"><rect x=".2" y=".8" width="117.800" height="1.600" fill="#0052cc"/></svg>
<!-- ===== REPORT MENU ===== -->
<div class="a" style="left:312px;top:219px;width:1px;height:265px;background:#e6e6e6"></div>
<div class="a" style="left:187.100px;top:269.700px;width:119px;height:23px;background:#0d6efd"></div>
<div class="t" style="left:196.50px;top:230.00px;font-size:9.5px;color:#2f2f2f;letter-spacing:0.048px;">Initial Risk Matrix</div>
<div class="t" style="left:196.50px;top:254.00px;font-size:9.5px;color:#2f2f2f;letter-spacing:-0.039px;">Residual Risk Matrix</div>
<div class="t" style="left:196.50px;top:276.00px;font-size:9.5px;color:#fff;letter-spacing:-0.018px;-webkit-text-stroke:.35px #fff;">Risk Distribution - Pie</div>
<div class="t" style="left:196.50px;top:299.00px;font-size:9.5px;color:#2f2f2f;letter-spacing:0.008px;">Upcoming Reports</div>
<div class="a" style="left:0;top:97.300px;width:983px;height:4.500px;background:linear-gradient(180deg,rgba(9,30,66,.13),rgba(9,30,66,.04) 55%,rgba(9,30,66,0))"></div>
<!-- ===== CHART ===== -->
<svg style="left:313px;top:220px" width="670" height="264" viewBox="313 220 670 264"><defs><clipPath id="cc"><rect x="313" y="220" width="670" height="264"/></clipPath></defs><g clip-path="url(#cc)"><path d="M524.20 293.27A91.4 91.4 0 0 1 599.62 423.91A6.5 6.5 0 0 1 590.51 426.73L574.78 417.64A6.5 6.5 0 0 1 572.11 409.33A60.3 60.3 0 0 0 523.07 324.39A6.5 6.5 0 0 1 517.20 317.92L517.20 299.75A6.5 6.5 0 0 1 524.20 293.27Z" fill="#04a01a" stroke="#fff" stroke-width="1.900" stroke-linejoin="round"/><path d="M592.62 436.03A91.4 91.4 0 0 1 441.78 436.03A6.5 6.5 0 0 1 443.89 426.73L459.62 417.64A6.5 6.5 0 0 1 468.16 419.49A60.3 60.3 0 0 0 566.24 419.49A6.5 6.5 0 0 1 574.78 417.64L590.51 426.73A6.5 6.5 0 0 1 592.62 436.03Z" fill="#deb704" stroke="#fff" stroke-width="1.900" stroke-linejoin="round"/><path d="M434.78 423.91A91.4 91.4 0 0 1 434.78 344.89A6.5 6.5 0 0 1 443.89 342.07L459.62 351.16A6.5 6.5 0 0 1 462.29 359.47A60.3 60.3 0 0 0 462.29 409.33A6.5 6.5 0 0 1 459.62 417.64L443.89 426.73A6.5 6.5 0 0 1 434.78 423.91Z" fill="#d40000" stroke="#fff" stroke-width="1.900" stroke-linejoin="round"/><path d="M441.78 332.77A91.4 91.4 0 0 1 510.20 293.27A6.5 6.5 0 0 1 517.20 299.75L517.20 317.92A6.5 6.5 0 0 1 511.33 324.39A60.3 60.3 0 0 0 468.16 349.31A6.5 6.5 0 0 1 459.62 351.16L443.89 342.07A6.5 6.5 0 0 1 441.78 332.77Z" fill="#640000" stroke="#fff" stroke-width="1.900" stroke-linejoin="round"/><path d="M596.09 338.85L605.10 333.65L616.60 333.65" fill="none" stroke="#04a01a" stroke-width="1" stroke-opacity=".85"/><path d="M517.20 475.50L517.20 485.90L528.70 485.90" fill="none" stroke="#deb704" stroke-width="1" stroke-opacity=".85"/><path d="M426.10 384.40L415.70 384.40L404.20 384.40" fill="none" stroke="#d40000" stroke-width="1" stroke-opacity=".85"/><path d="M471.65 305.51L466.45 296.50L454.95 296.50" fill="none" stroke="#640000" stroke-width="1" stroke-opacity=".85"/><path d="M784.40 293.27A91.4 91.4 0 0 1 836.63 454.01A6.5 6.5 0 0 1 827.16 452.88L816.48 438.19A6.5 6.5 0 0 1 817.42 429.50A60.3 60.3 0 0 0 783.27 324.39A6.5 6.5 0 0 1 777.40 317.92L777.40 299.75A6.5 6.5 0 0 1 784.40 293.27Z" fill="#deb704" stroke="#fff" stroke-width="1.900" stroke-linejoin="round"/><path d="M825.30 462.24A91.4 91.4 0 0 1 688.57 362.89A6.5 6.5 0 0 1 696.89 358.24L714.17 363.86A6.5 6.5 0 0 1 718.51 371.44A60.3 60.3 0 0 0 807.93 436.40A6.5 6.5 0 0 1 816.48 438.19L827.16 452.88A6.5 6.5 0 0 1 825.30 462.24Z" fill="#d40000" stroke="#fff" stroke-width="1.900" stroke-linejoin="round"/><path d="M692.89 349.58A91.4 91.4 0 0 1 770.40 293.27A6.5 6.5 0 0 1 777.40 299.75L777.40 317.92A6.5 6.5 0 0 1 771.53 324.39A60.3 60.3 0 0 0 722.14 360.27A6.5 6.5 0 0 1 714.17 363.86L696.89 358.24A6.5 6.5 0 0 1 692.89 349.58Z" fill="#640000" stroke="#fff" stroke-width="1.900" stroke-linejoin="round"/><path d="M777.40 293.30L777.40 282.90L788.90 282.90" fill="none" stroke="#04a01a" stroke-width="1" stroke-opacity=".85"/><path d="M864.04 356.25L873.93 353.03L885.43 353.03" fill="none" stroke="#deb704" stroke-width="1" stroke-opacity=".85"/><path d="M723.85 458.10L717.74 466.52L706.24 466.52" fill="none" stroke="#d40000" stroke-width="1" stroke-opacity=".85"/><path d="M723.85 310.70L717.74 302.28L706.24 302.28" fill="none" stroke="#640000" stroke-width="1" stroke-opacity=".85"/></g></svg>
<div class="a" style="left:313px;top:220px;width:670px;height:263.300px;overflow:hidden">
<div class="t" style="left:307.70px;top:109.00px;font-size:9px;color:#444;letter-spacing:0.061px;">Low</div>
<div class="t" style="left:219.80px;top:261.00px;font-size:9px;color:#444;letter-spacing:0.464px;">Medium</div>
<div class="t" style="left:67.70px;top:160.00px;font-size:9px;color:#444;letter-spacing:0.221px;">High</div>
<div class="t" style="left:104.25px;top:72.00px;font-size:9px;color:#444;letter-spacing:0.012px;">Extreme</div>
<div class="t" style="left:480.00px;top:58.00px;font-size:9px;color:#444;letter-spacing:0.061px;">Low</div>
<div class="t" style="left:576.53px;top:128.00px;font-size:9px;color:#444;letter-spacing:0.464px;">Medium</div>
<div class="t" style="left:369.74px;top:242.00px;font-size:9px;color:#444;letter-spacing:0.221px;">High</div>
<div class="t" style="left:355.54px;top:78.00px;font-size:9px;color:#444;letter-spacing:0.012px;">Extreme</div>
</div>
<div class="a" style="left:538.5px;top:247.300px;width:17px;height:9px;background:#04a01a;border-radius:2.200px"></div>
<div class="t" style="left:560.20px;top:248.00px;font-size:8.6px;color:#333;letter-spacing:0.311px;">Low</div>
<div class="a" style="left:586.1px;top:247.300px;width:17px;height:9px;background:#deb704;border-radius:2.200px"></div>
<div class="t" style="left:607.80px;top:248.00px;font-size:8.6px;color:#333;letter-spacing:0.687px;">Medium</div>
<div class="a" style="left:651.7px;top:247.300px;width:17px;height:9px;background:#d40000;border-radius:2.200px"></div>
<div class="t" style="left:673.40px;top:248.00px;font-size:8.6px;color:#333;letter-spacing:0.553px;">High</div>
<div class="a" style="left:702.5px;top:247.300px;width:17px;height:9px;background:#640000;border-radius:2.200px"></div>
<div class="t" style="left:723.70px;top:248.00px;font-size:8.6px;color:#333;letter-spacing:0.229px;">Extreme</div>
</body>
</html>
